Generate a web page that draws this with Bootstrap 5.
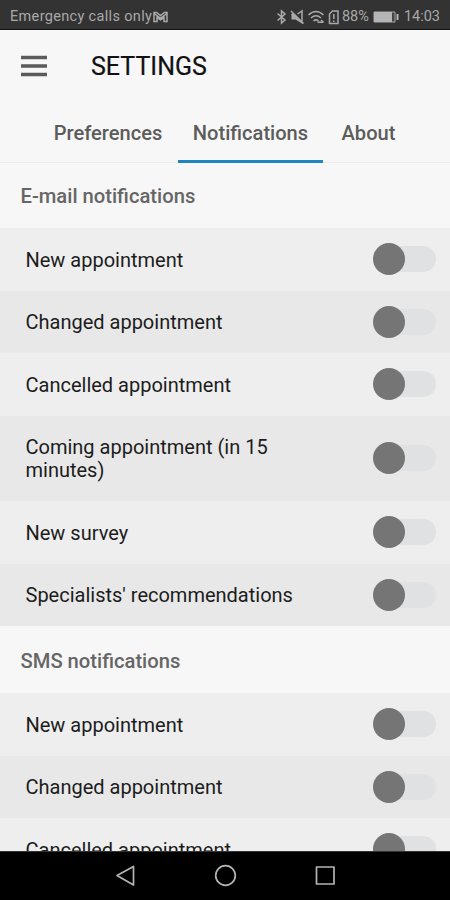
<!DOCTYPE html>
<html lang="en">
<head>
<meta charset="utf-8">
<meta name="viewport" content="width=device-width, initial-scale=1">
<title>Settings</title>
<link href="https://cdn.jsdelivr.net/npm/bootstrap@5.3.0/dist/css/bootstrap.min.css" rel="stylesheet">
<style>
body{font-family:Roboto,sans-serif;background:#f7f7f7;color:#1c1c1c}
.screen{width:450px;height:900px}
.statusbar{height:30px;background:#333;color:#a9a9a9;font-size:14.5px;line-height:26px;padding:4px 10px 0 10px;border-bottom:1px solid #151515}
.carrier{letter-spacing:.33px}
.appbar{height:73px;padding:0 21px}
.burger{margin-bottom:2px}
.title{font-size:25px;font-weight:400;line-height:1;margin-left:44px;color:#111;-webkit-text-stroke:.2px #111}
.tabs{height:60px;border-bottom:1px solid #ebebeb;padding-left:38px}
.tabs .nav-link{height:60px;border-bottom:3px solid transparent;padding:18px 0 0;color:#5c5c5c;font-size:20.100px;font-weight:500;line-height:24px;text-align:center}
.tabs .nav-link.active{border-color:#1f86c0}
.tab-a{width:140px}.tab-b{width:145px}.tab-c{width:91px}
.section-title{height:65px;font-size:20.200px;font-weight:500;line-height:24px;color:#666;padding-left:20.500px;margin:0}
.section-title.second{height:67px;padding-top:2px}
.option{height:62.5px;padding:0 14px 0 25.500px;background:#eee;font-size:20px;line-height:23px}
.option:nth-child(even){background:#e8e8e8}
.option.tall{height:85.5px}
.option .txt{width:275px;padding-top:1.500px}
.toggle{width:63px;height:32px}
.toggle::before{content:"";width:32px;height:32px;border-radius:50%;background:#757575;z-index:1}
.toggle::after{content:"";width:47px;height:26px;margin-left:-16px;border-radius:13px;background:#dfe1e2}
.softkeys{height:49px;background:#000;border-top:1px solid #333}
</style>
</head>
<body>
<div class="screen d-flex flex-column overflow-hidden">
  <header class="statusbar d-flex align-items-center flex-shrink-0">
    <span class="carrier">Emergency calls only</span>
    <svg class="me-auto" width="17" height="14" viewBox="0 0 17 14" fill="none" stroke="#a9a9a9" stroke-width="1.500"><path d="M2 11.500V2.500h2.500l4 3 4-3H15v9h-3V7.500L8.500 9.800 5 7.500v4zM2 3.500l6.500 4.500L15 3.500"/></svg>
    <svg class="stat" width="66" height="18" viewBox="276.5 6.5 66 18" fill="none" stroke="#a9a9a9" stroke-width="1.500"><path d="M278 12l7.500 6.500-3.500 3V9.500l3.500 3-7.500 6.500"/><path d="M292 13h2.500l8 8v-11.500l-4.500 3M291.500 9.500l12.500 12.500"/><path d="M292 12.500v5.500h4l6.500 4V20l-7.500-7.500z" fill="#a9a9a9" stroke="none"/><path d="M309 13.500q7.500-7 15 0M311.500 16.500q5-4.500 10 0M314 19.500q2.500-2.300 5 0M318 20.800h6M321.500 18.500l2.500 2.300"/><path d="M330 12.500l3-3h5.500V22H330zM334.300 12.500v5M334.300 19v1.500"/></svg>
    <span class="pct">88%</span>
    <svg class="ms-1 me-1" width="27" height="14" viewBox="0 0 27 14"><path d="M1 2h21v10H1z" fill="#444" stroke="#a9a9a9"/><path d="M1 2h18v10H1zM23.500 4h2v6h-2z" fill="#b5b5b5"/></svg>
    <span class="clock">14:03</span>
  </header>
  <div class="appbar d-flex align-items-center flex-shrink-0">
    <svg class="burger" width="26" height="24" viewBox="0 0 26 24" stroke="#5b5b5b" stroke-width="3.600"><path d="M0 3.500h26M0 12h26M0 20.500h26"/></svg>
    <h1 class="title mb-0">SETTINGS</h1>
  </div>
  <nav class="tabs nav flex-nowrap flex-shrink-0">
    <a class="nav-link tab-a" href="#"><span>Preferences</span></a>
    <a class="nav-link tab-b active" href="#"><span>Notifications</span></a>
    <a class="nav-link tab-c" href="#"><span>About</span></a>
  </nav>
  <main class="flex-grow-1 overflow-hidden">
    <h2 class="section-title d-flex align-items-center"><span>E-mail notifications</span></h2>
    <div>
      <div class="option d-flex align-items-center justify-content-between"><span class="txt">New appointment</span><span class="toggle d-flex align-items-center"></span></div>
      <div class="option d-flex align-items-center justify-content-between"><span class="txt">Changed appointment</span><span class="toggle d-flex align-items-center"></span></div>
      <div class="option d-flex align-items-center justify-content-between"><span class="txt">Cancelled appointment</span><span class="toggle d-flex align-items-center"></span></div>
      <div class="option tall d-flex align-items-center justify-content-between"><span class="txt">Coming appointment (in 15 minutes)</span><span class="toggle d-flex align-items-center"></span></div>
      <div class="option d-flex align-items-center justify-content-between"><span class="txt">New survey</span><span class="toggle d-flex align-items-center"></span></div>
      <div class="option d-flex align-items-center justify-content-between"><span class="txt">Specialists' recommendations</span><span class="toggle d-flex align-items-center"></span></div>
    </div>
    <h2 class="section-title second d-flex align-items-center"><span>SMS notifications</span></h2>
    <div>
      <div class="option d-flex align-items-center justify-content-between"><span class="txt">New appointment</span><span class="toggle d-flex align-items-center"></span></div>
      <div class="option d-flex align-items-center justify-content-between"><span class="txt">Changed appointment</span><span class="toggle d-flex align-items-center"></span></div>
      <div class="option d-flex align-items-center justify-content-between"><span class="txt">Cancelled appointment</span><span class="toggle d-flex align-items-center"></span></div>
    </div>
  </main>
  <footer class="softkeys flex-shrink-0 d-flex justify-content-center align-items-center">
    <svg width="222" height="26" viewBox="114 863 222 26" fill="none" stroke="#b4b4b4" stroke-width="1.700" stroke-linejoin="round"><path d="M133.500 866.500v18.500l-16.500-9.500z"/><circle cx="225.500" cy="875.500" r="9.800"/><rect x="316.500" y="867" width="17.500" height="17"/></svg>
  </footer>
</div>
<script src="https://cdn.jsdelivr.net/npm/bootstrap@5.3.0/dist/js/bootstrap.bundle.min.js"></script>
</body>
</html>
